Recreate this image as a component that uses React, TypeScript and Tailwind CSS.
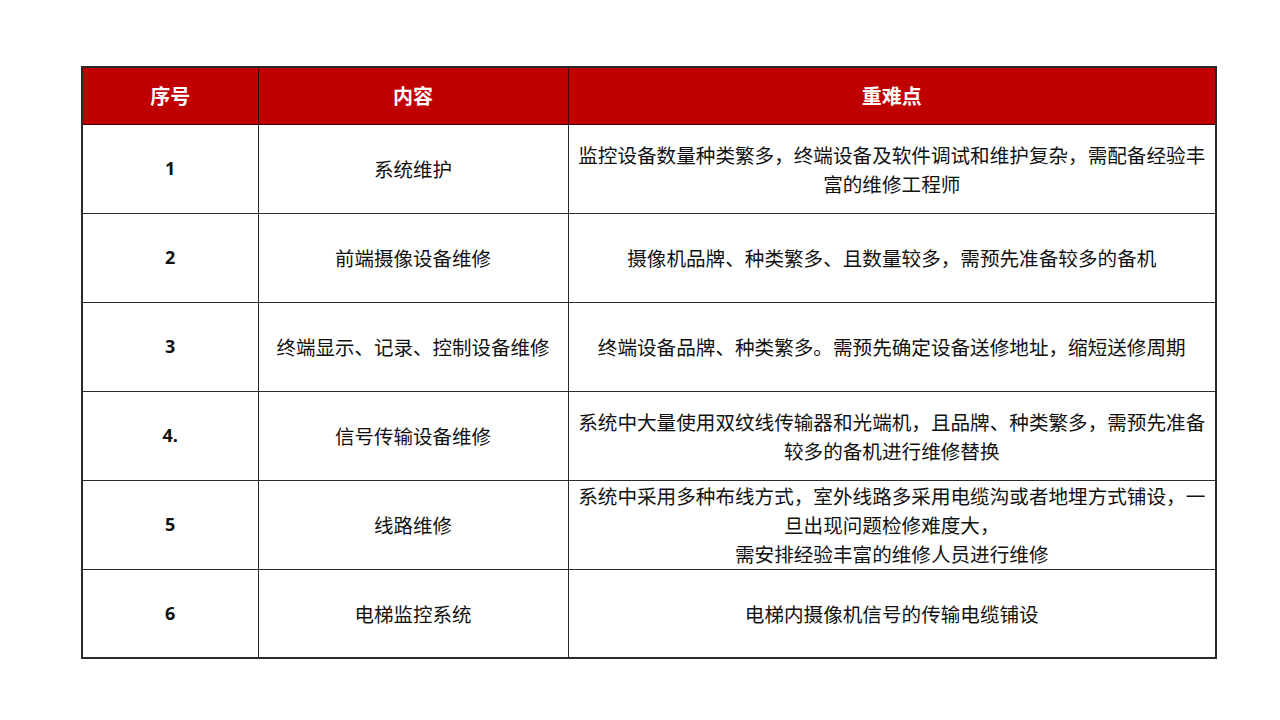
const rows: { no: string; item: string; points: string[] }[] = [
  {
    no: '1',
    item: '系统维护',
    points: ['监控设备数量种类繁多，终端设备及软件调试和维护复杂，需配备经验丰', '富的维修工程师'],
  },
  { no: '2', item: '前端摄像设备维修', points: ['摄像机品牌、种类繁多、且数量较多，需预先准备较多的备机'] },
  { no: '3', item: '终端显示、记录、控制设备维修', points: ['终端设备品牌、种类繁多。需预先确定设备送修地址，缩短送修周期'] },
  {
    no: '4.',
    item: '信号传输设备维修',
    points: ['系统中大量使用双纹线传输器和光端机，且品牌、种类繁多，需预先准备', '较多的备机进行维修替换'],
  },
  {
    no: '5',
    item: '线路维修',
    points: ['系统中采用多种布线方式，室外线路多采用电缆沟或者地埋方式铺设，一', '旦出现问题检修难度大，', '需安排经验丰富的维修人员进行维修'],
  },
  { no: '6', item: '电梯监控系统', points: ['电梯内摄像机信号的传输电缆铺设'] },
];

const cjk = "font-['Noto_Sans_CJK_SC',sans-serif]";

export default function App() {
  return (
    <div className="w-[1280px] h-[720px] bg-white pt-[66px] pl-[81px]">
      <table className="table-fixed border-collapse w-[1134px] border-2 border-[#2a2a2a]">
        <colgroup>
          <col className="w-[176px]" />
          <col className="w-[310px]" />
          <col className="w-[648px]" />
        </colgroup>
        <thead>
          <tr className="h-[57px] bg-[#c00000]">
            {['序号', '内容', '重难点'].map((h) => (
              <th
                key={h}
                className={`border border-[#3a0000] text-white text-[20px] font-bold text-center align-middle ${cjk}`}
              >
                {h}
              </th>
            ))}
          </tr>
        </thead>
        <tbody>
          {rows.map((r) => (
            <tr key={r.no} className="h-[89px]">
              <td className="border border-[#2a2a2a] text-center align-middle text-[18px] font-bold text-[#111] font-['Open_Sans',sans-serif]">
                {r.no}
              </td>
              <td className={`border border-[#2a2a2a] text-center align-middle text-[19.5px] text-[#111] whitespace-nowrap ${cjk}`}>
                {r.item}
              </td>
              <td className={`border border-[#2a2a2a] text-center align-middle text-[19.6px] leading-[29px] text-[#111] ${cjk}`}>
                {r.points.map((p) => (
                  <div key={p} className="whitespace-nowrap">
                    {p}
                  </div>
                ))}
              </td>
            </tr>
          ))}
        </tbody>
      </table>
    </div>
  );
}
